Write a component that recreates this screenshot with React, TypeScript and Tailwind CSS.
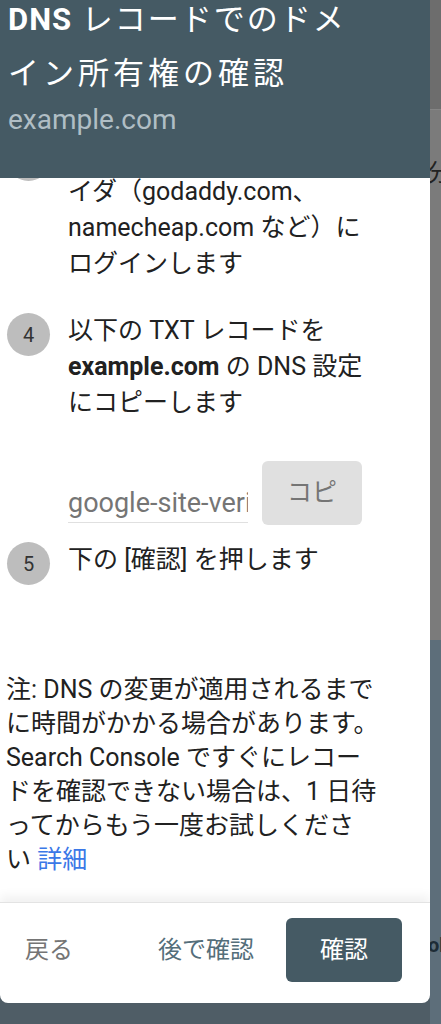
import React from "react";

const font = { fontFamily: 'Roboto, "Noto Sans CJK JP", sans-serif' };

function StepBadge({ n }: { n: number }) {
  return (
    <div className="w-[43px] h-[43px] shrink-0 rounded-full bg-[#bdbdbd] flex items-center justify-center text-[20px] text-[#333]">
      {n}
    </div>
  );
}

function Step({ n, children }: { n: number; children: React.ReactNode }) {
  return (
    <div className="flex gap-[18px] pl-[7px]">
      <StepBadge n={n} />
      <div className="text-[25px] leading-[36px] text-[#212121] whitespace-nowrap">{children}</div>
    </div>
  );
}

export default function App() {
  return (
    <div className="w-[441px] h-[1024px] flex overflow-hidden bg-[#4f5d66]" style={font}>
      <div className="w-[430px] flex flex-col">
        <div className="h-[1003px] bg-white rounded-b-[8px] overflow-hidden flex flex-col">
          {/* header */}
          <div className="h-[178px] shrink-0 bg-[#455a64] px-[8px] overflow-hidden">
            <div className="-mt-[7px] text-[31px] leading-[54px] text-white whitespace-nowrap">
              <div className="tracking-[2px]">
                <span className="font-bold tracking-[1px]">DNS</span> レコードでのドメ
              </div>
              <div className="tracking-[4px]">イン所有権の確認</div>
            </div>
            <div className="mt-[1px] text-[28px] leading-[36px] text-[#b0bec5]">example.com</div>
          </div>

          {/* scrolled content */}
          <div className="flex-1 overflow-hidden">
            <div className="-mt-[40px] flex flex-col">
              <Step n={3}>
                ドメイン名プロバ
                <br />
                イダ（godaddy.com、
                <br />
                namecheap.com など）に
                <br />
                ログインします
              </Step>

              <div className="mt-[31px]">
                <Step n={4}>
                  以下の TXT レコードを
                  <br />
                  <span className="font-bold">example.com</span> の DNS 設定
                  <br />
                  にコピーします
                </Step>
              </div>

              <div className="mt-[40px] pl-[68px] flex items-start gap-[14px]">
                <div className="w-[180px] h-[62px] flex items-end border-b border-[#e0e0e0] overflow-hidden">
                  <span className="text-[27px] leading-[36px] pb-[1px] text-[#757575] whitespace-nowrap">
                    google-site-verification=
                  </span>
                </div>
                <div className="w-[100px] h-[64px] rounded-[6px] bg-[#e0e0e0] flex items-center justify-center text-[25px] text-[#757575]">
                  コピ
                </div>
              </div>

              <div className="mt-[17px]">
                <Step n={5}>下の [確認] を押します</Step>
              </div>

              <p className="mt-[88px] px-[6px] text-[25px] leading-[34px] text-[#212121] whitespace-nowrap">
                注: DNS の変更が適用されるまで
                <br />
                に時間がかかる場合があります。
                <br />
                Search Console ですぐにレコー
                <br />
                ドを確認できない場合は、1 日待
                <br />
                ってからもう一度お試しくださ
                <br />
                い <a className="text-[#3b78e7]">詳細</a>
              </p>
            </div>
          </div>

          {/* footer */}
          <div className="h-[101px] shrink-0 border-t border-[#e3e3e3] shadow-[0_-6px_10px_rgba(0,0,0,0.06)] flex items-start pt-[15px] pl-[25px]">
            <div className="h-[64px] flex items-center text-[24px] text-[#757575]">戻る</div>
            <div className="h-[64px] ml-[85px] flex items-center text-[24px] text-[#546e7a]">後で確認</div>
            <div className="h-[64px] w-[116px] ml-[32px] rounded-[6px] bg-[#455a64] flex items-center justify-center text-[24px] text-white">
              確認
            </div>
          </div>
        </div>
      </div>

      {/* page behind the dialog */}
      <div className="w-[11px] flex flex-col overflow-hidden">
        <div className="h-[110px] bg-[#6d6d6d] border-b border-[#858585]" />
        <div className="h-[530px] bg-[#7b7b7b] overflow-hidden">
          <div className="mt-[48px] -ml-[3px] text-[24px] leading-[30px] text-[#222]">分</div>
        </div>
        <div className="flex-1 bg-[#5d6e7a] overflow-hidden">
          <div className="mt-[290px] -ml-[2px] text-[20px] leading-[30px] font-bold text-[#1d2c36]">ok</div>
        </div>
      </div>
    </div>
  );
}
